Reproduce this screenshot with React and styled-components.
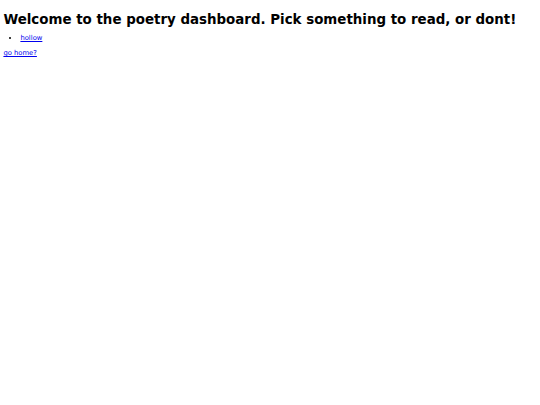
import React from 'react'
import styled, { createGlobalStyle } from 'styled-components'

const GlobalStyle = createGlobalStyle`
  body {
    margin: 3.4px;
    font-family: "DejaVu Sans", sans-serif;
    font-size: 6.8px;
    background: #fff;
    color: #000;
  }
`
const Title = styled.h1`
  font-size: 13.4px;
  font-weight: bold;
  margin: 8.5px 0 7.5px;
`
const List = styled.ul`
  margin: 6px 0 7px;
  padding-left: 2.5em;
`
const Link = styled.a`
  color: #0000ee;
`

const App = () => {
  return (
    <>
      <GlobalStyle />
      <Title>Welcome to the poetry dashboard. Pick something to read, or dont!</Title>
      <List>
        <li><Link href="#">hollow</Link></li>
      </List>
      <Link href="#">go home?</Link>
    </>
  )
}

export default App
